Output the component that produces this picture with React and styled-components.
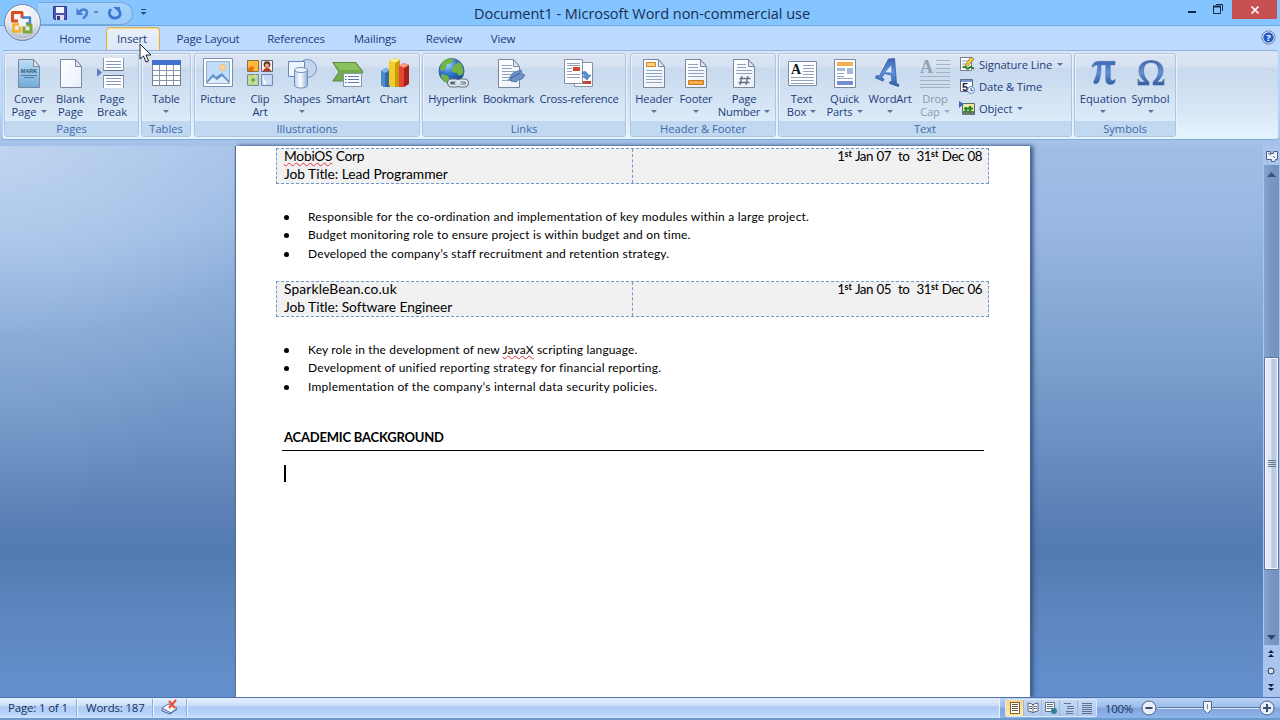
import React from "react";
import styled, { createGlobalStyle, css } from "styled-components";

const GlobalStyle = createGlobalStyle`
  * { box-sizing: border-box; }
  body { margin: 0; width: 1280px; height: 720px; overflow: hidden; font-family: "Open Sans", "Noto Sans", sans-serif; }
  svg { display: block; flex: none; }
`;

const Window = styled.div`
  position: relative;
  width: 1280px;
  height: 720px;
  display: flex;
  flex-direction: column;
  overflow: hidden;
  color: #1e3c7b;
`;

const TitleBar = styled.header`
  height: 26px;
  flex: none;
  display: flex;
  background: #84c4ff;
  border-bottom: 1px solid #6ba5e2;
`;
const QuickAccess = styled.div`
  width: 95px;
  height: 23px;
  margin: 2px 0 0 38px;
  padding: 0 0 2px 14px;
  display: flex;
  align-items: center;
  border: 1px solid #79a8dc;
  border-left: 0;
  border-radius: 0 12px 12px 0;
  background: linear-gradient(#a5d2fc, #9bccfb);
`;
const QuickMore = styled.div`
  padding: 9px 0 0 7px;
  width: 20px;
`;
const WindowTitle = styled.h1`
  margin: 0;
  flex: 1;
  padding-left: 321px;
  font-size: 14.5px;
  line-height: 27px;
  font-weight: 400;
  letter-spacing: -0.03px;
  white-space: nowrap;
  color: #172e52;
`;
const WindowControls = styled.div`
  display: flex;
  width: 96px;
`;
const CloseButton = styled.div`
  width: 45px;
  height: 19px;
  display: grid;
  place-items: center;
  background: #c75050;
`;
const OfficeButton = styled.div`
  position: absolute;
  left: 3px;
  top: 3px;
`;

const TabStrip = styled.nav`
  height: 24px;
  flex: none;
  display: flex;
  padding-left: 44px;
  background: linear-gradient(#b9d9ff, #bfdbff);
`;
const Tab = styled.div`
  width: ${(p) => p.$w}px;
  height: 24px;
  text-align: center;
  font-size: 11.5px;
  line-height: 26px;
  letter-spacing: -0.2px;
  white-space: nowrap;
  ${(p) =>
    p.$active &&
    css`
      margin-top: 1px;
      padding-right: 2px;
      line-height: 22px;
      border: 1px solid #c9b36f;
      border-bottom: 0;
      border-radius: 4px 4px 0 0;
      box-shadow: inset 0 1px 1px #ffd870, inset 1px 0 1px #ffe8a8, inset -1px 0 1px #ffe8a8;
      background: linear-gradient(#eaf1fc, #dce6f5);
    `}
`;
const Help = styled.div`
  margin-left: auto;
  padding: 4px 4px 0 0;
`;

const RibbonArea = styled.section`
  height: 96px;
  flex: none;
  padding: 0 1px 0 2px;
  background: linear-gradient(#bfdbff 0, #bfdbff 60%, #a9c4ea 92%, #a3c0e8);
`;
const Ribbon = styled.div`
  height: 89px;
  display: flex;
  gap: 3px;
  padding: 2px 0 0 2px;
  border: 1px solid #8db2e3;
  border-left-color: #b5d0f2;
  border-right-color: #b5d0f2;
  border-bottom: 2px solid #e1f4fb;
  border-radius: 4px;
  background: linear-gradient(#dce5f3 0, #d5e1f2 16px, #c8d9ee 17px, #d8e7f6 60px, #e3f4fe);
  box-shadow: 0 1px 1px #81a9d8;
`;
const GroupBox = styled.div`
  width: ${(p) => p.$w}px;
  height: 84px;
  flex: none;
  margin-left: ${(p) => p.$ml || 0}px;
  border: 1px solid #adc5e3;
  border-radius: 3px;
  box-shadow: 1px 1px 0 #eaf3fc, inset 1px 1px 0 rgba(238, 245, 253, 0.8);
  display: flex;
  flex-direction: column;
`;
const GroupBody = styled.div`
  height: 67px;
  flex: none;
  display: flex;
  padding: 3px 0 0 ${(p) => p.$pl}px;
`;
const GroupLabel = styled.div`
  height: 15px;
  flex: none;
  border-radius: 0 0 2px 2px;
  background: #c1d8f1;
  color: #3e6aaa;
  font-size: 11.2px;
  line-height: 15px;
  letter-spacing: -0.03px;
  text-align: center;
  white-space: nowrap;
`;
const BigButton = styled.div`
  width: ${(p) => p.$w}px;
  flex: none;
  display: flex;
  flex-direction: column;
  align-items: center;
  font-size: 11.2px;
  line-height: 13px;
  letter-spacing: ${(p) => p.$ls ?? -0.17}px;
  color: ${(p) => (p.$off ? "#8d99ab" : "#1e3c7b")};
  white-space: nowrap;
`;
const ButtonText = styled.div`
  display: flex;
  flex-direction: column;
  align-items: center;
  padding-top: 3px;
`;
const Line = styled.div`
  height: 13px;
  display: flex;
  align-items: center;
  gap: 4px;
`;
const Caret = styled.i`
  width: 0;
  height: 0;
  border: 3px solid transparent;
  border-top-color: ${(p) => (p.$off ? "#9aabc4" : "#5b7299")};
  border-bottom: 0;
`;
const SmallStack = styled.div`
  display: flex;
  flex-direction: column;
  padding-left: 3px;
  margin-top: -4px;
`;
const SmallButton = styled.div`
  height: 22px;
  flex: none;
  display: flex;
  align-items: center;
  gap: 4px;
  font-size: 11.2px;
  letter-spacing: -0.1px;
  white-space: nowrap;
  ${Caret} { margin-left: 1px; }
`;

const Workspace = styled.main`
  height: 551px;
  flex: none;
  display: flex;
  background:
    radial-gradient(ellipse 330px 190px at 0 0, rgba(205, 222, 244, 0.6), rgba(205, 222, 244, 0) 100%),
    radial-gradient(ellipse 260px 380px at 0 0, rgba(180, 207, 240, 0.4), rgba(180, 207, 240, 0) 100%),
    linear-gradient(#a2bee7 0, #98b7e1 80px, #7fa3d1 200px, #7095c6 270px, #5b80b5 370px, #527bb0 408px, #5d86bf 465px, #6590ce 551px);
`;
const Page = styled.article`
  width: 794px;
  margin-left: 236px;
  padding: 2px 41px 0 40px;
  background: #fff;
  color: #000;
  font-family: Lato, "Liberation Sans", sans-serif;
  box-shadow: -1px 0 1px #5e7497, 2px 0 4px #3b5788, 4px 0 4px rgba(50, 76, 124, 0.4);
`;
const Job = styled.div`
  width: 713px;
  height: 36px;
  margin-top: ${(p) => p.$mt || 0}px;
  display: flex;
  border: 1px dashed #7297cd;
  background: #f1f1f1;
  font-size: 13.8px;
  line-height: 18px;
  white-space: nowrap;
`;
const JobName = styled.div`
  width: 356px;
  height: 34px;
  padding-left: 7px;
  border-right: 1px dashed #7297cd;
`;
const JobLines = styled.div`
  margin-top: -2px;
`;
const JobText = styled.div`
  letter-spacing: ${(p) => p.$ls || 0}px;
`;
const JobDates = styled.div`
  flex: 1;
  margin-top: -2px;
  padding-right: 6px;
  text-align: right;
  white-space: pre;
  font-size: 13.4px;
  letter-spacing: -0.5px;
  word-spacing: 0.6px;
  sup { font-size: 9px; font-weight: 700; line-height: 0; vertical-align: 4px; letter-spacing: 0; }
`;
const Spelling = styled.span`
  text-decoration: underline wavy #e0303a 1px;
  text-underline-offset: 1px;
  text-decoration-skip-ink: none;
`;
const Bullets = styled.ul`
  list-style: none;
  margin: 24px 0 0;
  padding: 0 0 0 8px;
  height: 55px;
  font-size: 12px;
  line-height: 18.4px;
  white-space: nowrap;
`;
const Bullet = styled.li`
  display: flex;
  align-items: center;
  letter-spacing: ${(p) => p.$ls}px;
  &::before {
    content: "";
    width: 5px;
    height: 5px;
    margin-right: 19px;
    border-radius: 50%;
    background: #000;
  }
`;
const SectionTitle = styled.h2`
  width: 702px;
  height: 23px;
  margin: 32px 0 0 6px;
  padding-left: 2px;
  border-bottom: 1px solid #000;
  font-size: 13px;
  line-height: 19px;
  letter-spacing: -0.2px;
`;
const TextCaret = styled.div`
  width: 2px;
  height: 17px;
  margin: 14px 0 0 8px;
  background: #000;
`;

const ScrollColumn = styled.aside`
  width: 17px;
  margin-left: auto;
  padding-right: 1px;
  display: flex;
  flex-direction: column;
  align-items: center;
  background: #a9c5ee;
  border-left: 1px solid #a3c9f5;
`;
const ScrollTrack = styled.div`
  width: 15px;
  height: 480px;
  display: flex;
  flex-direction: column;
  align-items: center;
  background: linear-gradient(90deg, #84a3cf, #7896c4 50%, #7591bd);
`;
const TrackArrow = styled.div`
  height: ${(p) => p.$h}px;
  padding-top: ${(p) => p.$pt}px;
`;
const Thumb = styled.div`
  width: 15px;
  height: 213px;
  border: 1px solid #60759d;
  border-radius: 1px;
  box-shadow: inset 0 0 0 1px #f3f7fd;
  background: linear-gradient(90deg, #e7edf8 0, #dce5f4 45%, #b6c5dd 55%, #cad6e7);
  display: grid;
  place-items: center;
`;

const StatusBar = styled.footer`
  height: 23px;
  flex: none;
  display: flex;
  align-items: center;
  border-top: 1px solid #4f73ad;
  border-bottom: 2px solid #6b9cc9;
  background: linear-gradient(#e4efff 0, #cfe1fc 7px, #b0cbf3 9px, #b7d3fb 15px, #cce2ff);
  font-size: 11.4px;
  color: #15305f;
`;
const StatusItem = styled.div`
  width: ${(p) => p.$w}px;
  height: 18px;
  padding-left: ${(p) => p.$pl}px;
  line-height: 18px;
  letter-spacing: -0.13px;
  border-right: 1px solid #8caedd;
  box-shadow: 1px 0 0 #ecf4ff;
  white-space: nowrap;
`;
const ViewPanel = styled.div`
  width: 281px;
  height: 20px;
  margin-left: auto;
  padding-left: 5px;
  display: flex;
  align-items: center;
  border-left: 1px solid #eaf3ff;
  background: linear-gradient(#b8d2f7 0, #9dbdea 9px, #82a6dc 10px, #8fb5ec);
`;
const ViewButtons = styled.div`
  display: flex;
  width: 92px;
  height: 18px;
  border: 1px solid #dae8fb;
  border-radius: 2px;
  background: linear-gradient(#c5d9f5, #adc8ee);
`;
const ViewButton = styled.div`
  width: 18px;
  display: grid;
  place-items: center;
  background: ${(p) => (p.$on ? "linear-gradient(#fbd48d, #ffe9a6)" : "transparent")};
  border-right: 1px solid #9bb8df;
  &:last-child { border-right: 0; }
`;
const ZoomLabel = styled.span`
  width: 44px;
  padding-left: 8px;
  letter-spacing: -0.3px;
`;
const MousePointer = styled.div`
  position: absolute;
  left: 139px;
  top: 43px;
`;

const Icon = ({ children, w = 32, h = 32 }) => (
  <svg width={w} height={h} viewBox={`0 0 ${w} ${h}`} fill="none">{children}</svg>
);
const SheetPath = ({ fill = "url(#paper)" }) => (
  <>
    <path d="M5.5 2.5h15l6 7v21h-21z" fill={fill} stroke="#7b879b" />
    <path d="M20.5 2.5v7h6z" fill="#dfe8f5" stroke="#7b879b" />
  </>
);
const rules = (x1, x2, ys, c = "#91a3bf") => ys.map((y) => <path key={y} d={`M${x1} ${y}.5H${x2}`} stroke={c} />);

const Defs = () => (
  <svg width="0" height="0" style={{ position: "absolute" }}>
    <defs>
      <linearGradient id="paper" x1="0" y1="0" x2="1" y2="1"><stop offset="0" stopColor="#fff" /><stop offset="1" stopColor="#e9f0fb" /></linearGradient>
      <linearGradient id="cover" x1="0" y1="0" x2="0" y2="1"><stop offset="0" stopColor="#bcdcf5" /><stop offset="1" stopColor="#71abd9" /></linearGradient>
      <linearGradient id="metal" x1="0" y1="0" x2="1" y2="0"><stop offset="0" stopColor="#b9cdec" /><stop offset=".45" stopColor="#fafdff" /><stop offset="1" stopColor="#91aedb" /></linearGradient>
      <linearGradient id="ink" x1="0" y1="0" x2="0" y2="1"><stop offset="0" stopColor="#3d68b4" /><stop offset=".5" stopColor="#5f91dc" /><stop offset="1" stopColor="#315ba5" /></linearGradient>
      <radialGradient id="globe" cx=".35" cy=".25" r=".8"><stop offset="0" stopColor="#9fd2ff" /><stop offset=".45" stopColor="#3478cf" /><stop offset="1" stopColor="#12408f" /></radialGradient>
      <radialGradient id="orb" cx=".5" cy=".3" r=".7"><stop offset="0" stopColor="#fff" /><stop offset=".65" stopColor="#e1e5ed" /><stop offset="1" stopColor="#96a5bc" /></radialGradient>
    </defs>
  </svg>
);

const icons = {
  cover: <Icon><SheetPath fill="url(#cover)" /><text x="16" y="16" textAnchor="middle" fontSize="5.5" fontWeight="700" fontFamily="Liberation Sans" fill="#315a7d">MARK</text>{rules(8, 24, [18], "#4f7ea4")}{rules(11, 21, [20], "#4f7ea4")}</Icon>,
  blank: <Icon><SheetPath /></Icon>,
  pbreak: <Icon><path d="M7.5 1v12.500h20V1M7.5 31V18.500h20V31" fill="#fff" stroke="#8693aa" /><path d="M7.500 13.500h20M7.500 18.500h20" stroke="#61708a" />{rules(10, 25, [4, 7, 10, 21, 24, 27], "#8499bd")}<path d="M1.500 12l4 3.500-4 3.500z" fill="#5d82c3" stroke="#3e609f" strokeWidth=".6" /></Icon>,
  table: <Icon><path d="M2.500 4.500h28v24h-28z" fill="#fff" stroke="#717f96" /><path d="M2 3h29v5H2z" fill="#436fce" /><path d="M3 13.500h27M3 18.500h27M3 23.500h27M9.500 8v20M16.500 8v20M23.500 8v20" stroke="#8996aa" /></Icon>,
  picture: <Icon><path d="M1.500 1.500h29v28h-29z" fill="#fff" stroke="#7891b5" /><path d="M4.500 4.500h23v22h-23z" fill="#bdddfa" stroke="#93afd2" /><circle cx="20.500" cy="10.500" r="3" fill="#ffd79c" stroke="#f5b76b" /><path d="M5 24l6-7 3 3 6-4 7 8v2H5z" fill="#608dc8" /><path d="M5 26l6-6 4 3 5-4 7 7z" fill="#dcecfb" /></Icon>,
  clip: <Icon><path d="M3.500 3.500h11v11h-11z" fill="#ffbb38" stroke="#8a714b" /><path d="M4 12c3-5 5 0 7-4l-2 6H4z" fill="#e57413" /><path d="M17.500 3.500h11v11h-11z" fill="#fff0e4" stroke="#6b6169" /><circle cx="23" cy="7.500" r="3.300" fill="#573833" /><circle cx="23" cy="8.500" r="2" fill="#e9ac85" /><path d="M19 14c1-4 7-4 8 0z" fill="#c33324" /><path d="M3.500 17.500h11v11h-11z" fill="#acd9b0" stroke="#6f8e91" /><path d="M5 20l8 7M5 26l7-8" stroke="#f1df5b" strokeWidth="2" /><circle cx="9" cy="23" r="2" fill="#5faf61" /><path d="M17.500 17.500h11v11h-11z" fill="#c5d7f3" stroke="#7389ae" /><path d="M18 18l4 7 6-3-8 6z" fill="#f5f9ff" /></Icon>,
  shapes: <Icon><circle cx="21.500" cy="11.500" r="9" fill="#c2d5ef" stroke="#7593c1" /><path d="M2.500 4.500h16v15h-16z" fill="#edf4fd" stroke="#6685b8" /><path d="M8.500 13v15c0 4 13 4 13 0V13" fill="url(#metal)" stroke="#718eba" /><ellipse cx="15" cy="13" rx="6.500" ry="2.500" fill="#edf5ff" stroke="#718eba" /></Icon>,
  smart: <Icon><path d="M.800 5.500H24l7 9.500-7 9H.800L7 15z" fill="#72ad4d" stroke="#5c8a42" /><path d="M2 6h21l5 7H8z" fill="#8cc160" /><path d="M11.500 16.500h18v13h-18z" fill="#f7faff" stroke="#8695ab" />{rules(16, 27, [19, 22, 25], "#6178a0")}<path d="M13 19.500h1.500M13 22.500h1.500M13 25.500h1.500" stroke="#4c6289" /></Icon>,
  chart: <Icon><path d="M3 14l5-3 4 2v17H6l-3-2z" fill="#346aa5" /><path d="M3 14l5-3 4 2-5 3z" fill="#82b6e2" /><path d="M7 16v14H6l-3-2V14z" fill="#4b8bc8" /><path d="M11 4l5-3 6 2v27H15l-4-2z" fill="#c99a0b" /><path d="M11 4l5-3 6 2-5 3z" fill="#fff080" /><path d="M17 6v24h-2l-4-2V4z" fill="#f5cc25" /><path d="M21 9l5-3 5 2v19l-5 3h-5z" fill="#a52119" /><path d="M21 9l5-3 5 2-5 3z" fill="#ff9b7b" /><path d="M26 11v19h-5V9z" fill="#e6452f" /></Icon>,
  hyper: <Icon><circle cx="14.500" cy="14" r="12.500" fill="url(#globe)" stroke="#3a669f" /><path d="M4 7c4-6 9-6 13-5l-2 4-5 1-1 4-4 3-2-1zM15 10l7-5c3 2 5 7 4 12l-4 2-2-3-5-1zM5 17l6 2 2 4-2 3C7 25 4 21 4 18z" fill="#72b443" /><g stroke="#65727f" strokeWidth="4"><rect x="12" y="23.500" width="9" height="5" rx="2.500" /><rect x="21" y="23.500" width="9" height="5" rx="2.500" /></g><g stroke="#e0e6ec" strokeWidth="1.800"><rect x="12" y="23.500" width="9" height="5" rx="2.500" /><rect x="21" y="23.500" width="9" height="5" rx="2.500" /><path d="M18 26h6" /></g></Icon>,
  bookmark: <Icon><SheetPath />{rules(9, 19, [8, 11])}{rules(9, 23, [14, 17, 20, 23])}<path d="M17 20l3-4 5-2 3-1 1 4 3 1-3 4-4 1-2 2-5-1z" fill="#6d91cb" stroke="#41649c" strokeWidth=".8" /><path d="M15 23l12-7" stroke="#365a91" /></Icon>,
  cross: <Icon><path d="M11.500 5.500h18v24h-18z" fill="#fff" stroke="#8391a7" /><path d="M20 24h8v3h-8z" fill="#c74634" /><path d="M1.500 2.500h18v24h-18z" fill="#fff" stroke="#8391a7" />{rules(4, 17, [6, 8, 17, 20])}{rules(4, 9, [11, 14])}<path d="M10 10h7v4h-7z" fill="#ce4934" /><path d="M19 15q5-2 6 3h3l-4 5-5-4h3q0-2-3-2z" fill="#5c8ad2" stroke="#3c67a9" strokeWidth=".5" /></Icon>,
  header: <Icon><SheetPath />{rules(8, 24, [13, 16, 19, 22, 25])}<path d="M8.500 5.500h9v4h-9z" fill="#ffd28a" stroke="#d98317" /></Icon>,
  footer: <Icon><SheetPath />{rules(8, 18, [7, 10])}{rules(8, 24, [13, 16, 19])}<path d="M8.500 23.500h15v4h-15z" fill="#f9a84a" stroke="#c9781d" /></Icon>,
  number: <Icon><SheetPath />{rules(9, 18, [7, 10])}{rules(8, 24, [13, 16])}<path d="M14 19l-2 9M20 19l-2 9M11.500 21.500h11M10.500 25.500h11" stroke="#657183" strokeWidth="1.300" /></Icon>,
  textbox: <Icon><path d="M2.500 4.500h28v24h-28z" fill="#fff" stroke="#7e8da7" />{rules(17, 28, [8, 11, 14, 17])}{rules(5, 28, [20, 23, 26])}<text x="5" y="17" fontSize="14" fontWeight="700" fontFamily="Liberation Serif" fill="#101722">A</text></Icon>,
  quick: <Icon><path d="M5.500 2.500h21v28h-21z" fill="#fff" stroke="#7c89a0" /><path d="M8 5h16v4H8z" fill="#f7ad51" /><path d="M8 11h8v3H8zM18 11h6v6h-6z" fill="#a4b9d8" />{rules(8, 15, [16, 19])}{rules(8, 24, [21])}<path d="M8 24h16v4H8z" fill="#758ed1" /></Icon>,
  wordart: <Icon><path d="M16 2l6-.5 2 25 2.500 1-.5 2-9-3 .5-2 2 .5-.5-7-7-1.500-3 4 2.500 1.500-1 2-7.500-3 1-2.500 3 .5z" transform="translate(-1.500 0)" fill="url(#ink)" stroke="#365c9e" strokeWidth=".8" /><path d="M17 8.500l-5.500 6.500 6 .500z" fill="#d8e7fa" /></Icon>,
  drop: <Icon><text x="1" y="16" fontSize="18" fontWeight="700" fontFamily="Liberation Serif" fill="#93a0b2">A</text>{rules(17, 31, [3, 7, 11, 15], "#a7b2c2")}{rules(1, 31, [19, 23, 27, 30], "#a7b2c2")}</Icon>,
  pi: <Icon><g transform="translate(2 1) scale(.93)"><path d="M3 9Q5 3.500 11 3.500h17v4h-5v14q0 3 3 3l2-2v3q-1 3-5 3-5 0-5-5V7.500h-5c0 8-.500 14-2.500 18-1.500 3-6 3-5.500 0 2-4 4-9 4.500-18Q6 7.500 4 10z" fill="url(#ink)" stroke="#4770b2" strokeWidth=".5" /></g></Icon>,
  omega: <Icon><path d="M3 22l2 3h5C6 21 4 18 4 13.500 4 7 9 3.500 16 3.500s12 3.500 12 10c0 4.500-2 7.500-6 11.500h5l2-3v6H18v-3c4-4 5.500-7 5.500-11.500C23.500 9 21 5.500 16 5.500S8.500 9 8.500 13.500C8.500 18 10 21 14 25v3H3z" fill="url(#ink)" stroke="#54709b" strokeWidth=".7" /></Icon>,
};

const smallIcons = {
  signature: <Icon w={16} h={16}><path d="M1.500 1.500h11v13h-11z" fill="#fff" stroke="#717c8b" /><path d="M3 5h7M3 8h5M3 11h4" stroke="#8897ad" /><path d="M12 1l3 2-6 7-3 1 1-3z" fill="#f4ce43" stroke="#815f20" strokeWidth=".7" /><path d="M4 12c3-4 3 3 6 0s2 1 5 0" stroke="#2f7b2f" strokeWidth="2" /></Icon>,
  date: <Icon w={16} h={16}><path d="M1.500 1.500h12v12h-12z" fill="#fff" stroke="#5a6d8f" /><path d="M2 2h11v2H2z" fill="#7597cf" /><text x="3" y="12.500" fontSize="11" fontWeight="700" fontFamily="Liberation Sans" fill="#192644">5</text><circle cx="12" cy="12" r="3.500" fill="#edf5ff" stroke="#6585bd" /><path d="M12 10v2.500h2" stroke="#325487" /></Icon>,
  object: <Icon w={16} h={16}><path d="M3.500 3.500h12v11h-12z" fill="#f6e7a1" stroke="#596f6b" /><path d="M4 11h11v4H4z" fill="#697d71" /><path d="M7 12V7M11 13V6" stroke="#28852f" strokeWidth="2.500" /><path d="M5 8.500h4M9 8.500h5" stroke="#28852f" strokeWidth="2" /><path d="M0 1l5 3-5 4z" fill="#3569bd" /></Icon>,
};

function Big({ icon, w, lines, caret, ls, off }) {
  return (
    <BigButton $w={w} $ls={ls} $off={off}>
      {icons[icon]}
      <ButtonText>
        <Line>{lines[0]}</Line>
        <Line>{lines[1]}{caret && <Caret $off={off} />}</Line>
      </ButtonText>
    </BigButton>
  );
}
function Group({ w, label, pl = 0, ml, children }) {
  return (
    <GroupBox $w={w} $ml={ml}>
      <GroupBody $pl={pl}>{children}</GroupBody>
      <GroupLabel>{label}</GroupLabel>
    </GroupBox>
  );
}
function JobRow({ mt, name, nameSpacing, title, from, to }) {
  return (
    <Job $mt={mt}>
      <JobName>
        <JobLines>
          <JobText $ls={nameSpacing}>{name}</JobText>
          <JobText $ls={-0.04}>{title}</JobText>
        </JobLines>
      </JobName>
      <JobDates>1<sup>st</sup> Jan {from}{"  to  "}31<sup>st</sup> Dec {to}</JobDates>
    </Job>
  );
}

export default function App() {
  return (
    <Window>
      <GlobalStyle />
      <Defs />
      <TitleBar>
        <QuickAccess>
          <Icon w={16} h={16}><path d="M1.500 1.500h13v13h-12l-1-1z" fill="#5054b5" stroke="#32358f" /><path d="M4 2h8v6H4z" fill="#f1f6ff" /><path d="M4 10h8v5H4z" fill="#d8dceb" /><path d="M5 11h3v4H5z" fill="#333b7a" /></Icon>
          <svg width="17" height="16" viewBox="0 0 17 16" style={{ marginLeft: 7 }} fill="none"><path d="M4 8c2-4.500 8-4.500 8-.5 0 3-2 4.500-4 6" stroke="#4a7fd6" strokeWidth="2.600" /><path d="M1.500 3v7h7z" fill="#4a7fd6" /></svg>
          <svg width="8" height="6" viewBox="0 0 8 6"><path d="M1 1h6L4 4z" fill="#6289bd" /></svg>
          <svg width="16" height="16" viewBox="0 0 16 16" style={{ marginLeft: 7 }} fill="none"><path d="M4 4C0 9 4 13.500 8 13c6 0 6.500-6 3-9" stroke="#3f78d2" strokeWidth="2.800" /><path d="M6 2h7v6z" fill="#3f78d2" /></svg>
        </QuickAccess>
        <QuickMore><svg width="7" height="8" viewBox="0 0 7 8"><path d="M1 .5h5" stroke="#264d84" /><path d="M.500 3h6l-3 3z" fill="#264d84" /></svg></QuickMore>
        <WindowTitle>Document1 - Microsoft Word non-commercial use</WindowTitle>
        <WindowControls>
          <svg width="48" height="20" viewBox="0 0 48 20" fill="none"><path d="M4 12h8" stroke="#152b49" strokeWidth="2" /><path d="M29.500 6.500h7v7h-7zM32 4.500h6.500V11" stroke="#152b49" /><path d="M29 6.500h8" stroke="#152b49" strokeWidth="2" /></svg>
          <CloseButton><svg width="10" height="10" viewBox="0 0 10 10"><path d="M1.500 1.500l7 7m0-7l-7 7" stroke="#fff" strokeWidth="1.700" /></svg></CloseButton>
        </WindowControls>
      </TitleBar>
      <TabStrip>
        <Tab $w={62}>Home</Tab>
        <Tab $w={54} $active>Insert</Tab>
        <Tab $w={96}>Page Layout</Tab>
        <Tab $w={80}>References</Tab>
        <Tab $w={78}>Mailings</Tab>
        <Tab $w={60}>Review</Tab>
        <Tab $w={58}>View</Tab>
        <Help><svg width="15" height="15" viewBox="0 0 15 15"><circle cx="7.500" cy="7.500" r="6.600" fill="#e9f2ff" stroke="#667ba4" /><circle cx="7.500" cy="7.500" r="5.200" fill="#275bc9" /><text x="7.500" y="11" textAnchor="middle" fontSize="9.500" fontWeight="700" fill="#fff">?</text></svg></Help>
      </TabStrip>
      <RibbonArea>
        <Ribbon>
          <Group w={135} label="Pages" pl={3} ml={-1}>
            <Big icon="cover" w={42} lines={["Cover", "Page"]} caret ls={-0.05} />
            <Big icon="blank" w={41} lines={["Blank", "Page"]} ls={-0.05} />
            <Big icon="pbreak" w={42} lines={["Page", "Break"]} ls={-0.05} />
          </Group>
          <Group w={50} label="Tables" pl={3} ml={-1}>
            <Big icon="table" w={42} lines={["Table", ""]} caret />
          </Group>
          <Group w={226} label="Illustrations" pl={2}>
            <Big icon="picture" w={42} lines={["Picture", ""]} />
            <Big icon="clip" w={42} lines={["Clip", "Art"]} />
            <Big icon="shapes" w={42} lines={["Shapes", ""]} caret />
            <Big icon="smart" w={50} lines={["SmartArt", ""]} ls={-0.4} />
            <Big icon="chart" w={41} lines={["Chart", ""]} />
          </Group>
          <Group w={204} label="Links" pl={1} ml={-1}>
            <Big icon="hyper" w={57} lines={["Hyperlink", ""]} />
            <Big icon="bookmark" w={55} lines={["Bookmark", ""]} ls={-0.3} />
            <Big icon="cross" w={86} lines={["Cross-reference", ""]} ls={-0.25} />
          </Group>
          <Group w={146} label="Header & Footer" pl={2} ml={1}>
            <Big icon="header" w={42} lines={["Header", ""]} caret />
            <Big icon="footer" w={42} lines={["Footer", ""]} caret />
            <Big icon="number" w={54} lines={["Page", "Number"]} caret />
          </Group>
          <Group w={294} label="Text" pl={1} ml={-1}>
            <Big icon="textbox" w={43} lines={["Text", "Box"]} caret />
            <Big icon="quick" w={43} lines={["Quick", "Parts"]} caret />
            <Big icon="wordart" w={48} lines={["WordArt", ""]} caret />
            <Big icon="drop" w={42} lines={["Drop", "Cap"]} caret off />
            <SmallStack>
              <SmallButton>{smallIcons.signature}Signature Line<Caret /></SmallButton>
              <SmallButton>{smallIcons.date}Date &amp; Time</SmallButton>
              <SmallButton>{smallIcons.object}Object<Caret /></SmallButton>
            </SmallStack>
          </Group>
          <Group w={102} label="Symbols" pl={3} ml={-1}>
            <Big icon="pi" w={50} lines={["Equation", ""]} caret ls={0} />
            <Big icon="omega" w={45} lines={["Symbol", ""]} caret ls={-0.1} />
          </Group>
        </Ribbon>
      </RibbonArea>
      <Workspace>
        <Page>
          <JobRow name={<><Spelling>MobiOS</Spelling> Corp</>} nameSpacing={-0.25} title="Job Title: Lead Programmer" from="07" to="08" />
          <Bullets>
            <Bullet $ls={0.22}>Responsible for the co-ordination and implementation of key modules within a large project.</Bullet>
            <Bullet $ls={0.19}>Budget monitoring role to ensure project is within budget and on time.</Bullet>
            <Bullet $ls={0.19}>Developed the company’s staff recruitment and retention strategy.</Bullet>
          </Bullets>
          <JobRow mt={18} name="SparkleBean.co.uk" nameSpacing={0.14} title="Job Title: Software Engineer" from="05" to="06" />
          <Bullets>
            <Bullet $ls={0.15}><span>Key role in the development of new <Spelling>JavaX</Spelling> scripting language.</span></Bullet>
            <Bullet $ls={0.19}>Development of unified reporting strategy for financial reporting.</Bullet>
            <Bullet $ls={0.24}>Implementation of the company’s internal data security policies.</Bullet>
          </Bullets>
          <SectionTitle>ACADEMIC BACKGROUND</SectionTitle>
          <TextCaret />
        </Page>
        <ScrollColumn>
          <svg width="15" height="19" viewBox="0 0 15 19"><path d="M3 -1h9" stroke="#243858" strokeWidth="2" /><path d="M2.500 5.500h4v2h3v-2h4v8h-2l-1 2h-3v-2h-5z" fill="#eef3fc" stroke="#4e608b" /><path d="M4 7l3 2M9 10l2 2" stroke="#4e608b" /></svg>
          <ScrollTrack>
            <TrackArrow $h={192} $pt={7}><svg width="9" height="5" viewBox="0 0 9 5"><path d="M4.500 0L9 5H0z" fill="#375379" /></svg></TrackArrow>
            <Thumb><svg width="8" height="8" viewBox="0 0 8 8"><path d="M0 .500h8M0 2.500h8M0 4.500h8M0 6.500h8" stroke="#68798f" /></svg></Thumb>
            <TrackArrow $h={75} $pt={65}><svg width="9" height="5" viewBox="0 0 9 5"><path d="M4.500 5L9 0H0z" fill="#294b78" /></svg></TrackArrow>
          </ScrollTrack>
          <svg width="15" height="52" viewBox="0 0 15 52"><path d="M7 5l3 3H4zM7 9l3 3H4zM7 46l3-3H4zM7 42l3-3H4z" fill="#101e38" /><circle cx="7" cy="26" r="3" fill="#d7e2ec" stroke="#263751" /></svg>
        </ScrollColumn>
      </Workspace>
      <StatusBar>
        <StatusItem $w={77} $pl={8}>Page: 1 of 1</StatusItem>
        <StatusItem $w={76} $pl={9}>Words: 187</StatusItem>
        <StatusItem $w={34} $pl={8}><svg width="17" height="16" viewBox="0 0 17 16"><path d="M1 9l6-4 9 4-6 5z" fill="#f3f7ff" stroke="#55709d" /><path d="M1 10v2l8 3 7-5" fill="none" stroke="#496799" /><path d="M8 2l6 7m1-8L8 9" stroke="#f04c2c" strokeWidth="2" /></svg></StatusItem>
        <ViewPanel>
          <ViewButtons>
            <ViewButton $on><Icon w={12} h={12}><path d="M1.500.500h9v11h-9z" fill="#fff" stroke="#7a5b27" />{rules(3, 9, [2, 4, 6, 8], "#675a46")}</Icon></ViewButton>
            <ViewButton><Icon w={12} h={12}><path d="M1 1l4 1 1 1 1-1 4-1v8l-4 1-1 1-1-1-4-1zM6 3v8" fill="#fff" stroke="#5d6675" />{rules(2, 5, [4, 6], "#627087")}{rules(7, 10, [4, 6], "#627087")}</Icon></ViewButton>
            <ViewButton><Icon w={12} h={12}><path d="M.500.500h9v9h-9z" fill="#fff" stroke="#667286" />{rules(2, 8, [2, 4, 6], "#627087")}<circle cx="9" cy="9" r="3" fill="#337f91" /></Icon></ViewButton>
            <ViewButton><Icon w={12} h={12}>{rules(1, 8, [1], "#63758f")}{rules(4, 11, [4, 6], "#63758f")}{rules(3, 10, [9, 11], "#63758f")}</Icon></ViewButton>
            <ViewButton><Icon w={12} h={12}>{rules(1, 11, [1, 3, 5, 7, 9, 11], "#5e7089")}</Icon></ViewButton>
          </ViewButtons>
          <ZoomLabel>100%</ZoomLabel>
          <svg width="135" height="20" viewBox="0 0 135 20" fill="none"><path d="M17 9.500h102" stroke="#59779f" /><path d="M17 10.500h102" stroke="#d5e7ff" /><g fill="#e6effb" stroke="#4e6489"><circle cx="8" cy="10" r="7" /><circle cx="126" cy="10" r="7" /></g><g stroke="#3d506d" strokeWidth="2"><path d="M4.500 10h7M122 10h8M126 6v8" /></g><path d="M62.500 3.500h8v8l-4 4-4-4z" fill="#eff4fc" stroke="#536b91" /><path d="M66.500 6v5" stroke="#7186a5" /></svg>
        </ViewPanel>
      </StatusBar>
      <OfficeButton>
        <svg width="39" height="39" viewBox="0 0 39 39" fill="none"><circle cx="19.500" cy="19.500" r="18" fill="url(#orb)" stroke="#7588a5" /><circle cx="19.500" cy="19.500" r="16.500" stroke="#fff" opacity=".7" /><g strokeWidth="3" strokeLinejoin="round"><path d="M15 18H9.500V9.500H19V15" stroke="#dc4f1c" /><path d="M20.500 16V14.500h6.500v6h-4" stroke="#3f80c8" strokeWidth="2.400" /><path d="M16 21.500h-5.500v7h6.500v-5" stroke="#f7b020" strokeWidth="2.600" /><path d="M21 23.500v5.500h7v-7h-4.500" stroke="#7fa634" /></g></svg>
      </OfficeButton>
      <MousePointer>
        <svg width="14" height="21" viewBox="0 0 14 21"><path d="M1 1v15l3.500-3 2.500 6 2.500-1-2.500-6h5z" fill="#fff" stroke="#18202c" /></svg>
      </MousePointer>
    </Window>
  );
}
